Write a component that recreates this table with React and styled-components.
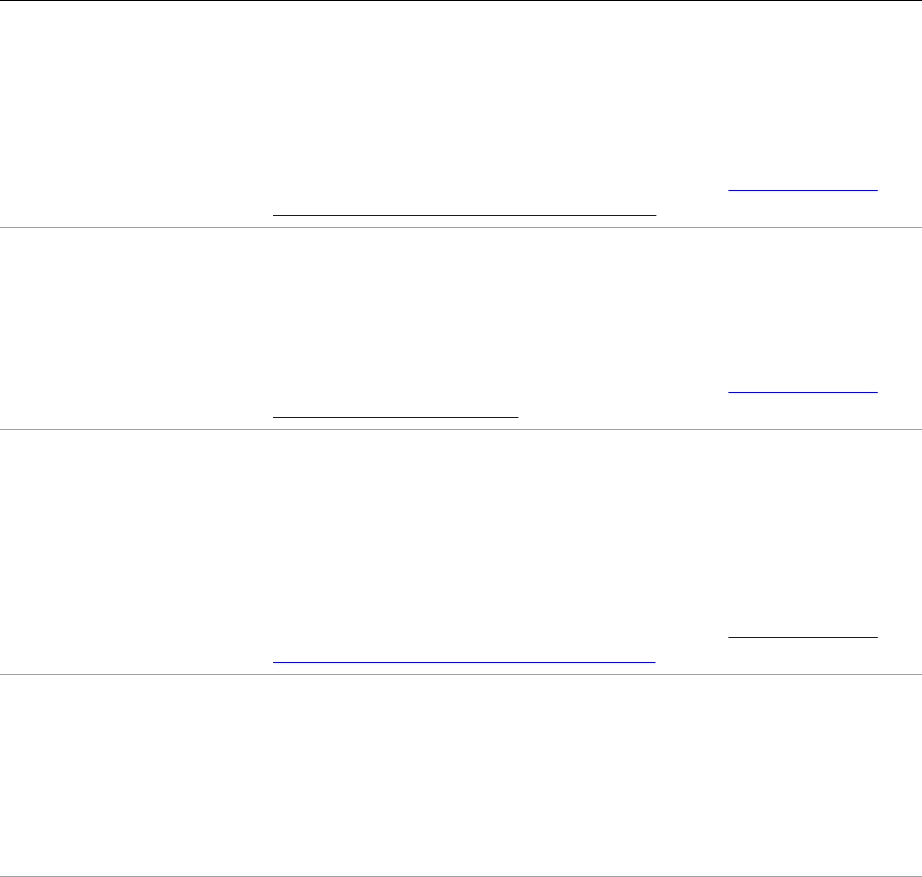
import React from 'react';
import styled, { createGlobalStyle } from 'styled-components';

const GlobalStyle = createGlobalStyle`
  html, body {
    margin: 0;
    padding: 0;
    background: #fff;
  }
  body {
    font-family: "Liberation Sans", Arial, sans-serif;
    font-size: 16px;
    line-height: 25px;
  }
`

const Glossary = styled.dl`
  margin: 0;
  border-top: 1px solid #000;
`

const Entry = styled.div`
  display: grid;
  grid-template-columns: 273px 1fr;
  padding: 20px 40px 6px 0;
  border-bottom: 1px solid #a0a0a0;
`

const Term = styled.dt`
  margin: 0;
  padding-left: 12px;
  color: transparent;
`

const Details = styled.dd`
  margin: 0;
  color: transparent;
  p {
    margin: 0;
  }
  p + p {
    margin-top: 18px;
  }
`

const Source = styled.div`
  color: transparent;
`

const SourceLink = styled.a`
  color: transparent;
  text-decoration: underline;
  text-decoration-color: #0000ee;
  text-decoration-skip-ink: none;
  word-break: break-all;
`

const entries = [
  {
    term: 'Linked Data',
    text: [
      'Linked Data is a method of publishing structured data so that it can be interlinked and become more useful through semantic queries. It builds upon standard Web technologies such as HTTP, RDF and URIs, but rather than using them to serve web pages only for human readers, it extends them to share information in a way that can be read automatically by computers. Part of the vision of linked data is for the Internet to become a global database where datasets from many publishers connect.',
    ],
    href: 'https://en.wikipedia.org/wiki/Linked_data_and_the_semantic_web_histories',
  },
  {
    term: 'Ontology',
    text: [
      'An ontology encompasses a representation, formal naming and definition of the categories, properties and relations between the concepts, data and entities that substantiate one, many or all domains of discourse. Every academic discipline or field creates ontologies to limit complexity and organize data into information and knowledge, improving problem-solving within that domain.',
    ],
    href: 'https://en.wikipedia.org/wiki/Ontologies_(Data_Science)',
  },
  {
    term: 'Knowledge Graph',
    text: [
      'A knowledge graph is a knowledge base that uses a graph-structured data model or topology to represent and operate on data. Knowledge graphs are often used to store interlinked descriptions of entities.',
      'Since the development of the Semantic Web, knowledge graphs have often been associated with linked open data projects, focusing on the connections between concepts and entities, and they are also closely tied to search engines.',
    ],
    href: 'https://en.wikipedia.org/wiki/Knowledge_Graph_and_linked_open_datasets',
  },
  {
    term: 'Triplestore',
    text: [
      'A triplestore or RDF store is a purpose-built database for the storage and retrieval of triples through semantic queries. A triple is a data entity composed of subject, predicate and object, like "Bob is 35" or "Bob knows Fred". Much like a relational database, information is stored in a triplestore and retrieved via a query language. Unlike a relational database, a triplestore is optimized for the storage and retrieval of triples. In addition to queries, triples can usually be imported and exported using the Resource Description Framework and other formats.',
    ],
  },
]

export default function App() {
  return (
    <>
      <GlobalStyle />
      <Glossary>
        {entries.map((e) => (
          <Entry key={e.term}>
            <Term>{e.term}</Term>
            <Details>
              {e.text.map((t, i) => <p key={i}>{t}</p>)}
              {e.href && (
                <Source>
                  Full texts and references are available online from the source at{' '}
                  <SourceLink href={e.href}>{e.href}</SourceLink>
                </Source>
              )}
            </Details>
          </Entry>
        ))}
      </Glossary>
    </>
  )
}
